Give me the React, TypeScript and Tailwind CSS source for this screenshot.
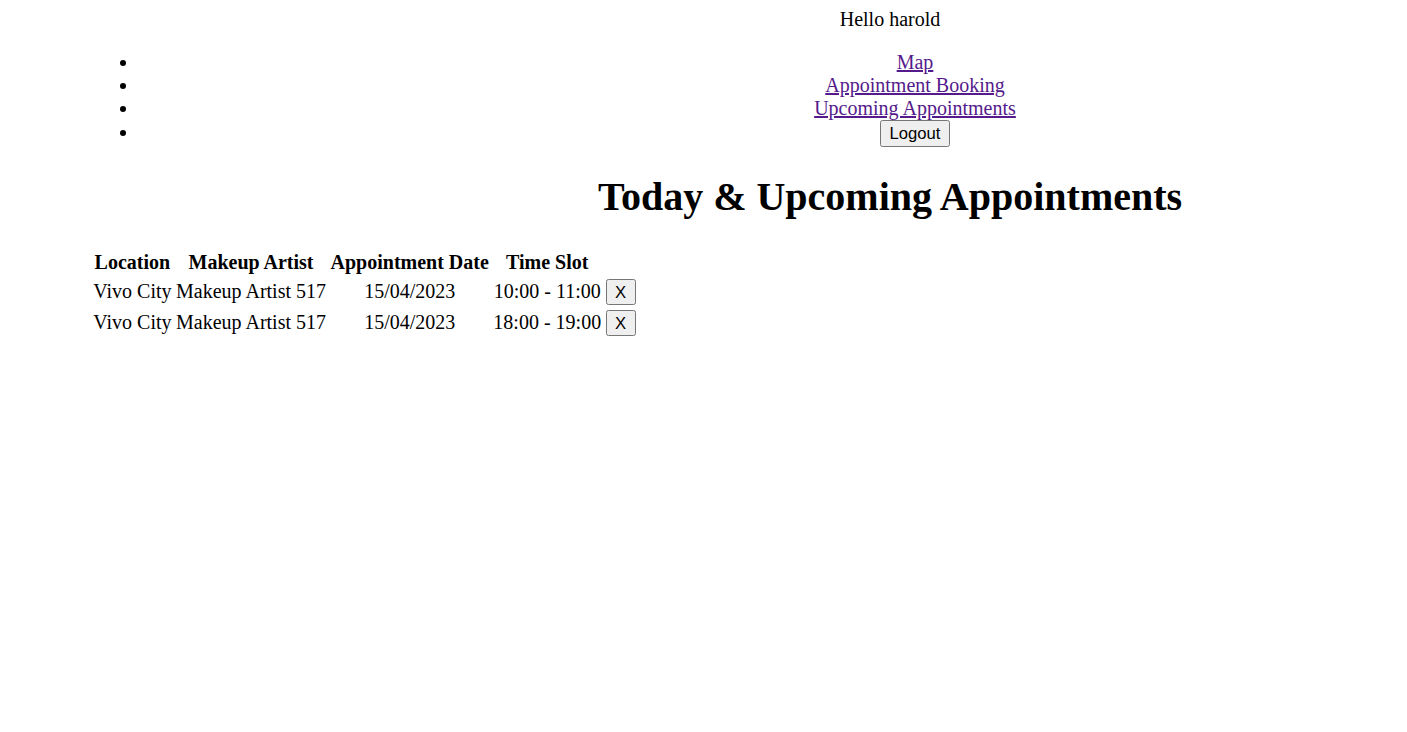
export default function App() {
  const rows = [
    { loc: "Vivo City", artist: "Makeup Artist 517", date: "15/04/2023", slot: "10:00 - 11:00" },
    { loc: "Vivo City", artist: "Makeup Artist 517", date: "15/04/2023", slot: "18:00 - 19:00" },
  ];
  const btn =
    "font-['Liberation_Sans',Arial,sans-serif] text-[16.67px] leading-[19px] bg-[#efefef] border-[1.25px] border-solid border-[#767676] rounded-[2.5px] text-black";
  return (
    <div className="min-h-screen overflow-hidden bg-white text-black font-['Liberation_Serif','Times_New_Roman',serif] text-[20px] leading-[23px] pt-[8px]">
      <div className="ml-[89px] w-[1602px] text-center">
        <div>Hello harold</div>
        <ul className="list-disc pl-[50px] mt-[20px]">
          <li>
            <a href="#" className="text-[#551a8b] underline">Map</a>
          </li>
          <li>
            <a href="#" className="text-[#551a8b] underline">Appointment Booking</a>
          </li>
          <li>
            <a href="#" className="text-[#551a8b] underline">Upcoming Appointments</a>
          </li>
          <li>
            <button className={btn + " w-[70px] h-[27px] px-[7.5px]"}>Logout</button>
          </li>
        </ul>
        <h1 className="text-[40px] leading-[46px] font-bold mt-[27px] mb-[28px]">
          Today &amp; Upcoming Appointments
        </h1>
        <table className="border-separate border-spacing-[2.5px] ml-[1px]">
          <thead>
            <tr>
              <th className="p-[1.25px] font-bold">Location</th>
              <th className="p-[1.25px] font-bold">Makeup Artist</th>
              <th className="p-[1.25px] font-bold">Appointment Date</th>
              <th className="p-[1.25px] font-bold">Time Slot</th>
            </tr>
          </thead>
          <tbody>
            {rows.map((r, i) => (
              <tr key={i}>
                <td className="p-[1.25px]">{r.loc}</td>
                <td className="p-[1.25px]">{r.artist}</td>
                <td className="p-[1.25px]">{r.date}</td>
                <td className="p-[1.25px]">{r.slot}</td>
                <td className="p-[1.25px]">
                  <button className={btn + " w-[30px] h-[26px] px-[7.5px] align-middle"}>X</button>
                </td>
              </tr>
            ))}
          </tbody>
        </table>
      </div>
    </div>
  );
}
